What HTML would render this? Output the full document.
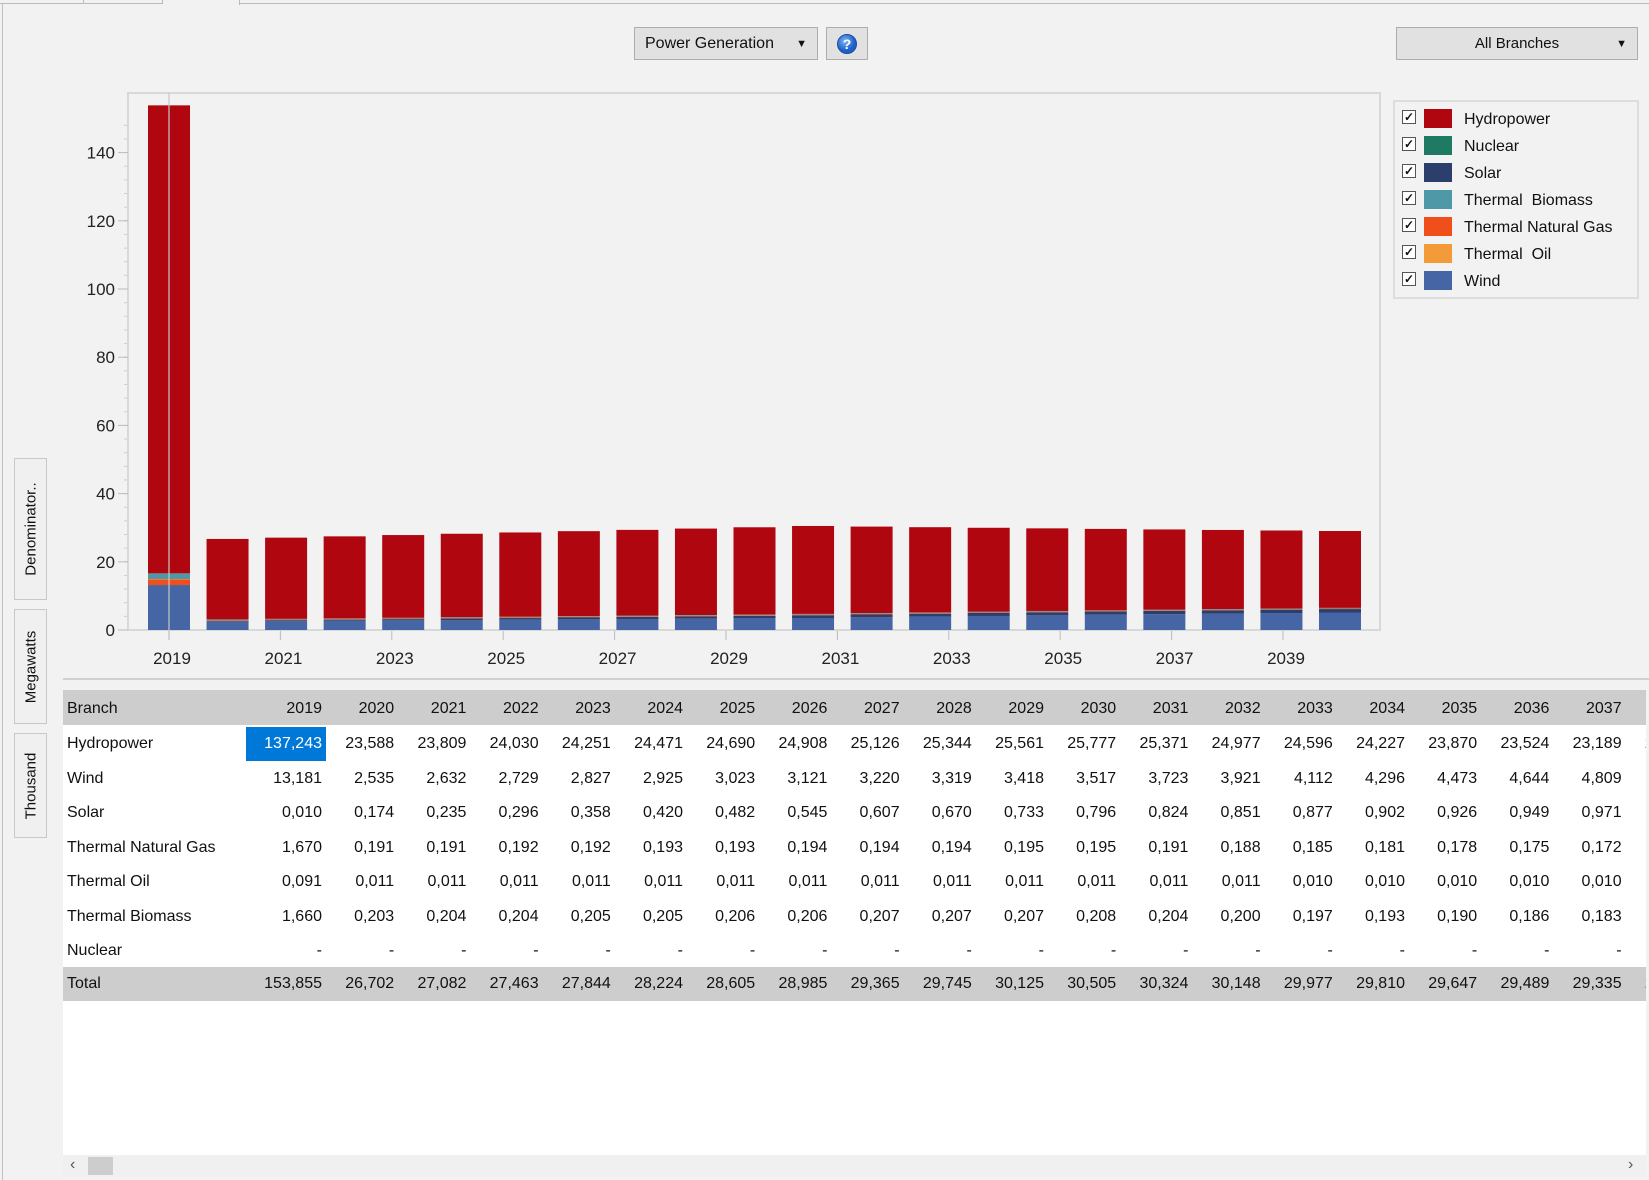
<!DOCTYPE html>
<html><head><meta charset="utf-8">
<style>
*{margin:0;padding:0;box-sizing:border-box}
body{width:1649px;height:1180px;background:#f2f2f2;font-family:"Liberation Sans",sans-serif;position:relative;overflow:hidden;color:#111}
.abs{position:absolute}
.btn{position:absolute;background:#e1e1e1;border:1px solid #adadad;font-size:16px;display:flex;align-items:center}
.vtab{position:absolute;left:14px;width:33px;border:1px solid #c8c8c8;background:#f0f0f0;font-size:15px}
.vtab span{position:absolute;left:50%;top:50%;transform:translate(-50%,-50%) rotate(-90deg);white-space:nowrap}
#tbl{position:absolute;left:63px;top:690px;width:1583px;height:486px;background:#fff;overflow:hidden;font-size:16px}
.row{position:absolute;left:0;width:1583px;height:34px}
.cell{position:absolute;top:0;height:34px;line-height:34px;text-align:right;width:70px}
.lbl{position:absolute;left:4px;top:0;line-height:34px}
.leg{position:absolute;left:1400px;font-size:16px;height:22px}
.cb{position:absolute;left:2px;top:2px;width:14px;height:14px;border:1px solid #555;background:#fff;font-size:12px;line-height:12px;text-align:center;font-weight:bold}
.sw{position:absolute;left:24px;top:1px;width:28px;height:19px}
.lt{position:absolute;left:64px;top:3px;white-space:nowrap}
</style></head><body>
<div class="abs" style="left:0;top:3px;width:1649px;height:1px;background:#bbb"></div>
<div class="abs" style="left:0;top:0;width:84px;height:4px;border-right:1px solid #bbb"></div>
<div class="abs" style="left:84px;top:0;width:79px;height:4px;border-right:1px solid #bbb"></div>
<div class="abs" style="left:163px;top:0;width:77px;height:5px;background:#f2f2f2;border-right:1px solid #bbb"></div>
<div class="abs" style="left:2px;top:4px;width:1px;height:1176px;background:#c0c0c0"></div>

<div class="btn" style="left:634px;top:27px;width:184px;height:33px;padding-left:10px">Power Generation<span style="position:absolute;right:10px;font-size:11px">▼</span></div>
<div class="btn" style="left:826px;top:27px;width:42px;height:33px;justify-content:center">
<svg width="22" height="22" viewBox="0 0 22 22"><defs><radialGradient id="g" cx="40%" cy="35%"><stop offset="0" stop-color="#7fb6f5"/><stop offset="1" stop-color="#1c5fc9"/></radialGradient></defs><circle cx="11" cy="11" r="9.5" fill="url(#g)" stroke="#1a4fa0"/><text x="11" y="16" font-size="14" font-weight="bold" fill="#fff" text-anchor="middle" font-family="Liberation Sans">?</text></svg></div>
<div class="btn" style="left:1396px;top:27px;width:242px;height:33px;justify-content:center;font-size:15px">All Branches<span style="position:absolute;right:10px;font-size:11px">▼</span></div>

<div class="abs" style="left:1393px;top:100px;width:246px;height:199px;border:2px solid #ddd"></div>
<div id="legend"></div>

<svg class="abs" style="left:0;top:0" width="1649" height="690" id="chart"></svg>
<div class="abs" style="left:63px;top:678px;width:1586px;height:2px;background:#d0d0d0"></div>

<div class="vtab" style="top:458px;height:142px"><span>Denominator..</span></div>
<div class="vtab" style="top:609px;height:115px"><span>Megawatts</span></div>
<div class="vtab" style="top:733px;height:105px"><span>Thousand</span></div>

<div id="tbl"></div>
<div class="abs" style="left:63px;top:1155px;width:1583px;height:22px;background:#f0f0f0"></div>
<div class="abs" style="left:70px;top:1156px;font-size:16px;color:#555">‹</div>
<div class="abs" style="left:88px;top:1157px;width:25px;height:18px;background:#cdcdcd"></div>
<div class="abs" style="left:1628px;top:1156px;font-size:16px;color:#555">›</div>
<div class="abs" style="left:1646px;top:690px;width:3px;height:490px;background:#f2f2f2"></div>

<script>
const C={h:'#b0060f',n:'#1f7a63',s:'#2c3e6b',b:'#4e98a8',g:'#f04e1a',o:'#f29b38',w:'#4565a5'};
const L=[['Hydropower','h'],['Nuclear','n'],['Solar','s'],['Thermal  Biomass','b'],['Thermal Natural Gas','g'],['Thermal  Oil','o'],['Wind','w']];
let lg='';L.forEach((l,i)=>{lg+=`<div class="leg" style="top:${108+i*27}px"><div class="cb">✓</div><div class="sw" style="background:${C[l[1]]}"></div><div class="lt">${l[0].replace(/  /g,'&nbsp;&nbsp;')}</div></div>`});
document.getElementById('legend').innerHTML=lg;
const yrs=[];for(let y=2019;y<=2039;y++)yrs.push(y);
const hy=[137.243,23.588,23.809,24.030,24.251,24.471,24.690,24.908,25.126,25.344,25.561,25.777,25.371,24.977,24.596,24.227,23.870,23.524,23.189,22.86,22.54];
const wi=[13.181,2.535,2.632,2.729,2.827,2.925,3.023,3.121,3.220,3.319,3.418,3.517,3.723,3.921,4.112,4.296,4.473,4.644,4.809,4.97,5.13];
const so=[0.010,.174,.235,.296,.358,.420,.482,.545,.607,.670,.733,.796,.824,.851,.877,.902,.926,.949,.971,.99,1.01];
const ga=[1.670,.191,.191,.192,.192,.193,.193,.194,.194,.194,.195,.195,.191,.188,.185,.181,.178,.175,.172,.17,.167];
const oi=[0.091,.011,.011,.011,.011,.011,.011,.011,.011,.011,.011,.011,.011,.011,.010,.010,.010,.010,.010,.01,.01];
const bi=[1.660,.203,.204,.204,.205,.205,.206,.206,.207,.207,.207,.208,.204,.200,.197,.193,.190,.186,.183,.18,.177];
const y0=630,k=68.2/20;
let s='<rect x="128" y="93" width="1252" height="537" fill="none" stroke="#d8d8d8" stroke-width="2"/>';
for(let v=0;v<=150;v+=4){const yy=y0-v*k;if(yy<95)break;s+=`<line x1="124" x2="127" y1="${yy}" y2="${yy}" stroke="#ccc"/>`}
for(let v=0;v<=140;v+=20){const yy=y0-v*k;s+=`<line x1="118" x2="128" y1="${yy}" y2="${yy}" stroke="#bbb"/><text x="115" y="${yy+6}" font-size="17" text-anchor="end" fill="#222" font-family="Liberation Sans">${v}</text>`}
yrs.forEach((y,i)=>{const x=148+i*58.55;let cur=y0;
 [[wi[i],'w'],[so[i],'s'],[ga[i],'g'],[oi[i],'o'],[bi[i],'b'],[hy[i],'h']].forEach(p=>{const h=p[0]*k;s+=`<rect x="${x}" y="${cur-h}" width="42" height="${h}" fill="${C[p[1]]}"/>`;cur-=h});
 if(i%2==0){const j=i/2;const cx=169+j*111.4;s+=`<line x1="${cx}" x2="${cx}" y1="631" y2="640" stroke="#bbb"/><text x="${cx+3}" y="664" font-size="17" text-anchor="middle" fill="#222" font-family="Liberation Sans">${y}</text>`}});
s+='<line x1="169" x2="169" y1="93" y2="640" stroke="#c8c8c8" stroke-width="1.5" opacity=".8"/>';
document.getElementById('chart').innerHTML=s;
const f=v=>v.toFixed(3).replace('.',',');
const T=[153.855,26.702,27.082,27.463,27.844,28.224,28.605,28.985,29.365,29.745,30.125,30.505,30.324,30.148,29.977,29.810,29.647,29.489,29.335,29.18,29.03];
const rows=[['Hydropower',hy],['Wind',wi],['Solar',so],['Thermal Natural Gas',ga],['Thermal Oil',oi],['Thermal Biomass',bi],['Nuclear',null]];
let t='<div class="row" style="top:0;height:35px;background:#cdcdcd;line-height:38px"><div class="lbl" style="line-height:38px">Branch</div>';
for(let i=0;i<20;i++)t+=`<div class="cell" style="left:${259+i*72.2-70}px;line-height:38px">${yrs[i]}</div>`;t+='</div>';
rows.forEach((r,ri)=>{t+=`<div class="row" style="top:${37+ri*34.5}px"><div class="lbl">${r[0]}</div>`;
 for(let i=0;i<20;i++){const sel=ri==0&&i==0;
  t+=`<div class="cell" style="left:${259+i*72.2-70}px;${sel?'background:#0078d7;color:#fff;left:183px;width:80px;padding-right:4px':''}">${r[1]?f(r[1][i]):'-'}</div>`}
 t+='</div>'});
t+='<div class="row" style="top:277px;height:34px;background:#cdcdcd"><div class="lbl">Total</div>';
for(let i=0;i<20;i++)t+=`<div class="cell" style="left:${259+i*72.2-70}px">${f(T[i])}</div>`;t+='</div>';
document.getElementById('tbl').innerHTML=t;
</script>
</body></html>
